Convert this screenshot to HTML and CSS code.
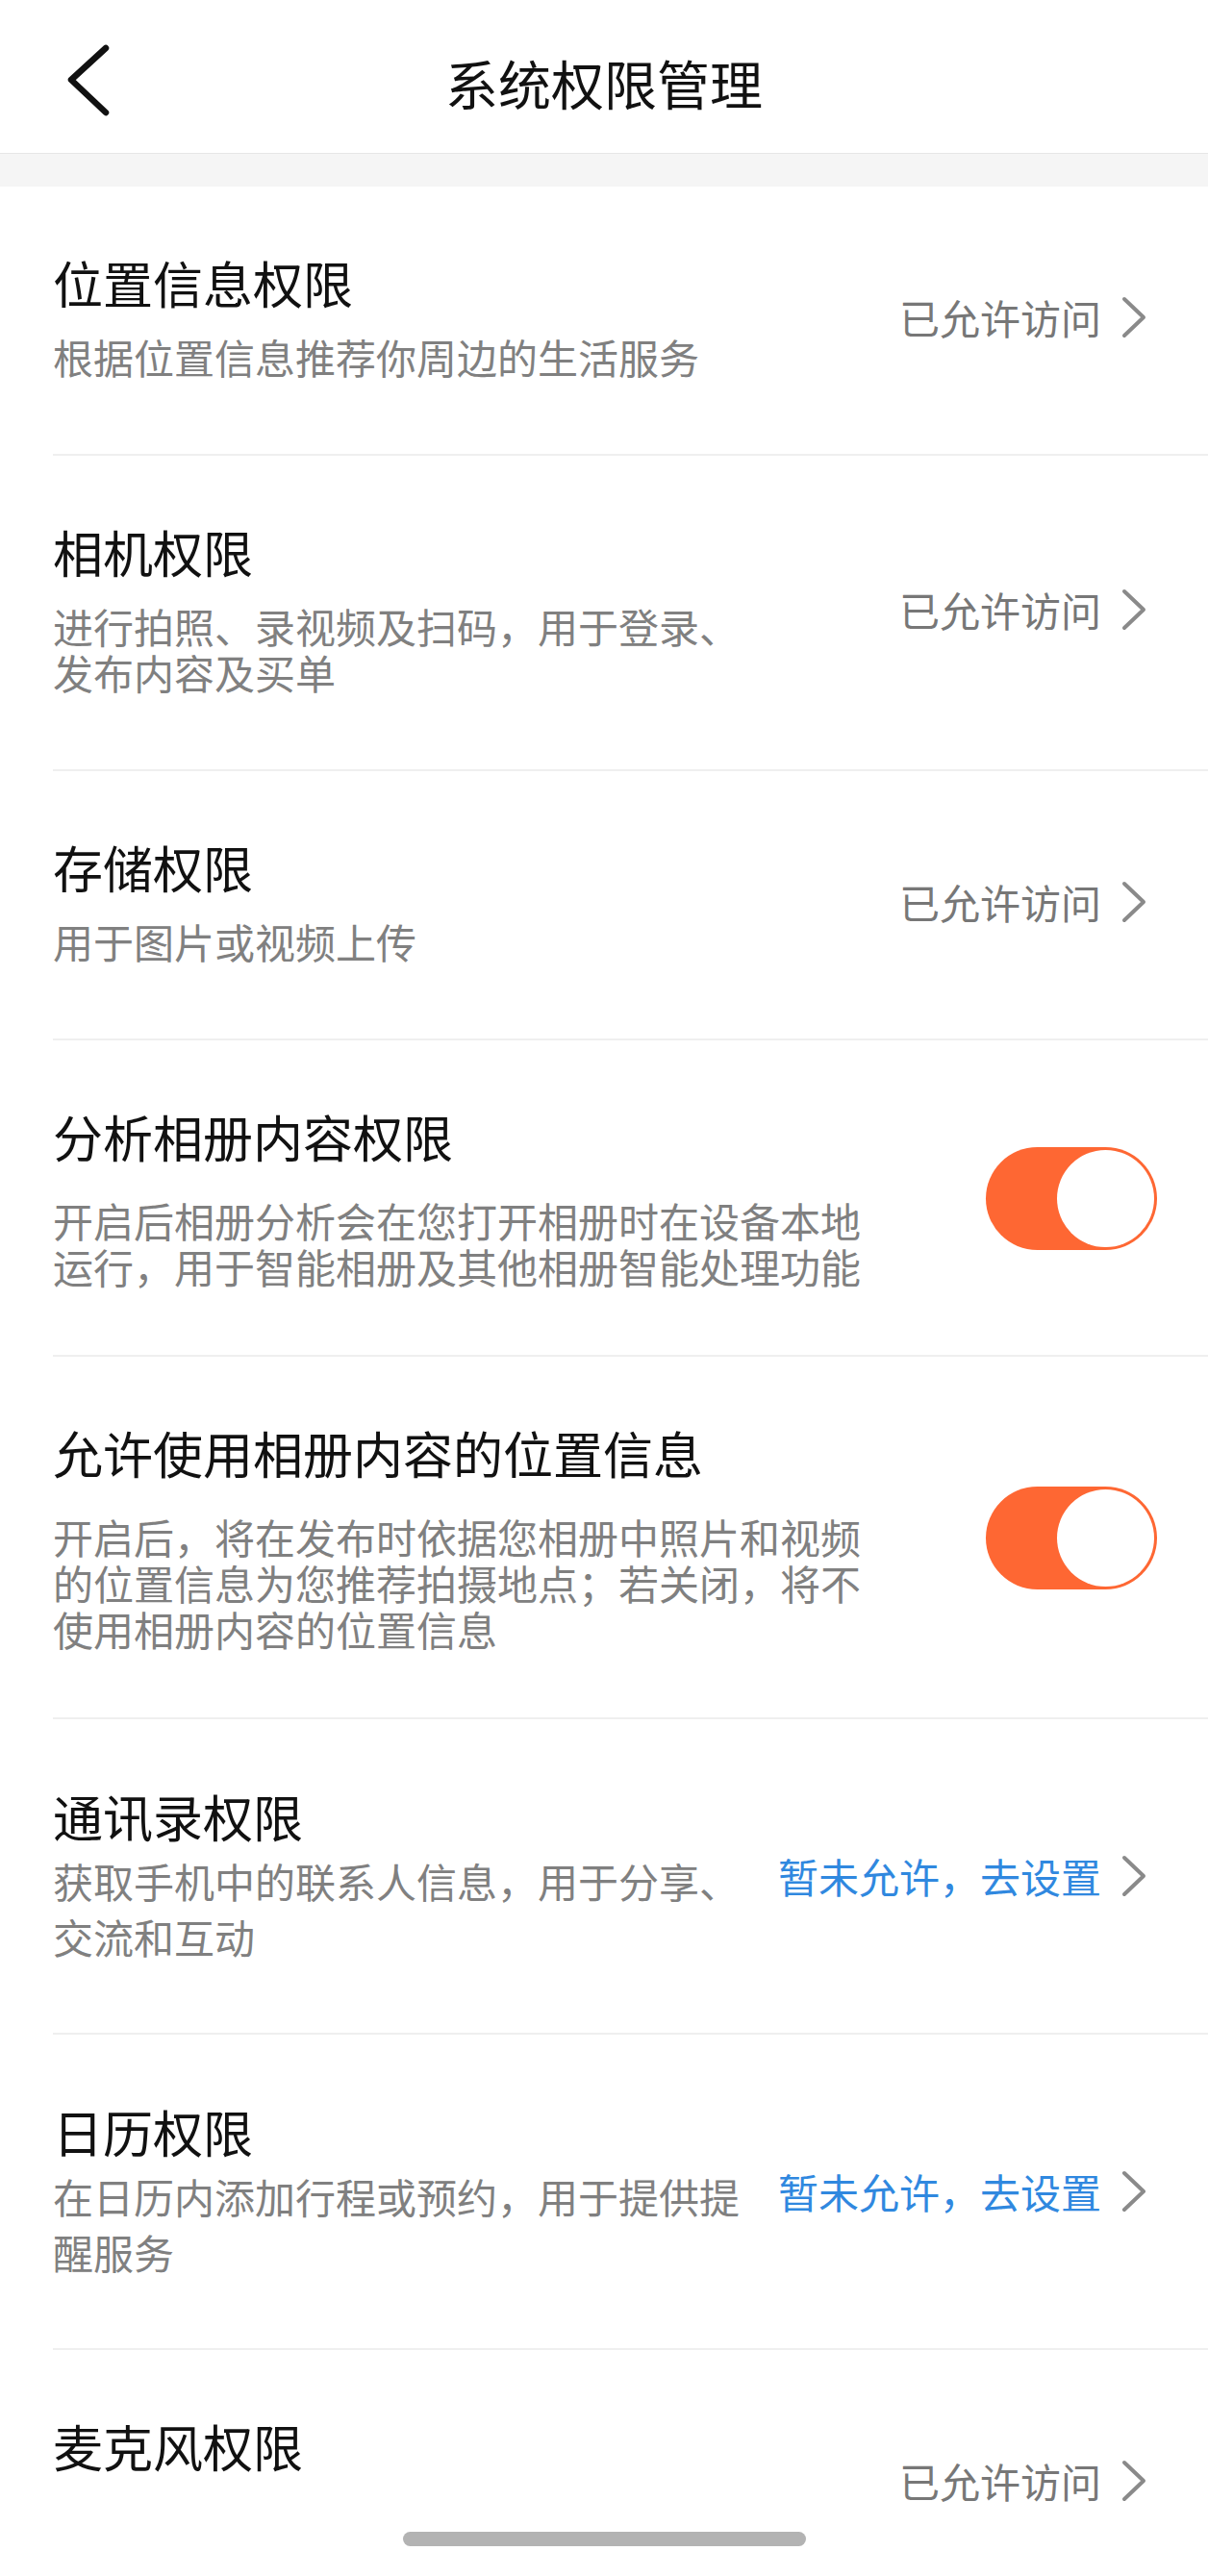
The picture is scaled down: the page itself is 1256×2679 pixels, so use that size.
FILE: index.html
```html
<!DOCTYPE html>
<html lang="zh-CN">
<head>
    <meta charset="UTF-8">
    <meta name="viewport" content="width=device-width, initial-scale=1.0">
    <title>系统权限管理</title>
    <link rel="stylesheet" href="styles.css">
</head>
<body>
    <header class="top-bar">
        <a class="back" href="#">
            <svg width="50" height="80" viewBox="0 0 50 80"><path d="M42 5 L6 38 L42 72" fill="none" stroke="#111" stroke-width="6.5" stroke-linecap="round" stroke-linejoin="round"/></svg>
        </a>
        <h1>系统权限管理</h1>
        <span></span>
    </header>
    <div class="gap"></div>

    <ul class="perm-list">
        <li class="item">
            <div class="info">
                <div class="title">位置信息权限</div>
                <div class="desc">根据位置信息推荐你周边的生活服务</div>
            </div>
            <div class="status">已允许访问<svg class="arrow" width="28" height="46" viewBox="0 0 28 46"><path d="M4 4 L24 23 L4 42" fill="none" stroke="#8a8a8a" stroke-width="4" stroke-linecap="round" stroke-linejoin="round"/></svg></div>
        </li>
        <li class="item">
            <div class="info">
                <div class="title">相机权限</div>
                <div class="desc">进行拍照、录视频及扫码，用于登录、发布内容及买单</div>
            </div>
            <div class="status">已允许访问<svg class="arrow" width="28" height="46" viewBox="0 0 28 46"><path d="M4 4 L24 23 L4 42" fill="none" stroke="#8a8a8a" stroke-width="4" stroke-linecap="round" stroke-linejoin="round"/></svg></div>
        </li>
        <li class="item">
            <div class="info">
                <div class="title">存储权限</div>
                <div class="desc">用于图片或视频上传</div>
            </div>
            <div class="status">已允许访问<svg class="arrow" width="28" height="46" viewBox="0 0 28 46"><path d="M4 4 L24 23 L4 42" fill="none" stroke="#8a8a8a" stroke-width="4" stroke-linecap="round" stroke-linejoin="round"/></svg></div>
        </li>
        <li class="item item-switch">
            <div class="info">
                <div class="title">分析相册内容权限</div>
                <div class="desc">开启后相册分析会在您打开相册时在设备本地运行，用于智能相册及其他相册智能处理功能</div>
            </div>
            <div class="switch on"><span class="knob"></span></div>
        </li>
        <li class="item item-switch">
            <div class="info">
                <div class="title">允许使用相册内容的位置信息</div>
                <div class="desc">开启后，将在发布时依据您相册中照片和视频的位置信息为您推荐拍摄地点；若关闭，将不使用相册内容的位置信息</div>
            </div>
            <div class="switch on"><span class="knob"></span></div>
        </li>
        <li class="item item-unset">
            <div class="info">
                <div class="title">通讯录权限</div>
                <div class="desc">获取手机中的联系人信息，用于分享、交流和互动</div>
            </div>
            <div class="status link">暂未允许，去设置<svg class="arrow" width="28" height="46" viewBox="0 0 28 46"><path d="M4 4 L24 23 L4 42" fill="none" stroke="#8a8a8a" stroke-width="4" stroke-linecap="round" stroke-linejoin="round"/></svg></div>
        </li>
        <li class="item item-unset">
            <div class="info">
                <div class="title">日历权限</div>
                <div class="desc">在日历内添加行程或预约，用于提供提醒服务</div>
            </div>
            <div class="status link">暂未允许，去设置<svg class="arrow" width="28" height="46" viewBox="0 0 28 46"><path d="M4 4 L24 23 L4 42" fill="none" stroke="#8a8a8a" stroke-width="4" stroke-linecap="round" stroke-linejoin="round"/></svg></div>
        </li>
        <li class="item">
            <div class="info">
                <div class="title">麦克风权限</div>
                <div class="desc">用于发布视频、直播及语音输入等功能</div>
            </div>
            <div class="status">已允许访问<svg class="arrow" width="28" height="46" viewBox="0 0 28 46"><path d="M4 4 L24 23 L4 42" fill="none" stroke="#8a8a8a" stroke-width="4" stroke-linecap="round" stroke-linejoin="round"/></svg></div>
        </li>
    </ul>

    <div class="home-bar"><span class="indicator"></span></div>
</body>
</html>
```

FILE: styles.css
```css
body {
    margin: 0;
    background: #fff;
    font-family: "Noto Sans CJK SC", "Noto Sans", sans-serif;
    color: #111;
}
.top-bar {
    display: grid;
    grid-template-columns: 1fr auto 1fr;
    align-items: center;
    height: 160px;
    box-sizing: border-box;
    padding-top: 10px;
    border-bottom: 1px solid #e6e6e6;
}
.back {
    display: flex;
    margin-left: 68px;
}
.top-bar h1 {
    margin: 0;
    font-size: 55px;
    font-weight: 400;
    line-height: 70px;
    color: #111;
}
.gap {
    height: 34px;
    background: #f5f5f5;
}
.perm-list {
    list-style: none;
    margin: 0;
    padding: 0;
}
.item {
    display: flex;
    align-items: center;
    justify-content: space-between;
    margin-left: 55px;
    padding: 70px 53px 77px 0;
    border-bottom: 2px solid #efefef;
}
.title {
    font-size: 52px;
    line-height: 60px;
    color: #111;
}
.desc {
    margin-top: 23px;
    max-width: 17.4em;
    font-size: 42px;
    line-height: 48px;
    color: #808080;
}
.status {
    display: flex;
    align-items: center;
    margin-right: 10px;
    font-size: 42px;
    line-height: 48px;
    color: #777;
    white-space: nowrap;
}
.status.link {
    color: #3088df;
}
.arrow {
    margin-left: 20px;
}
.item-switch {
    padding-bottom: 68px;
}
.item-switch .desc {
    margin-top: 33px;
    max-width: 20.4em;
}
.item-unset {
    padding-top: 71px;
    padding-bottom: 71px;
}
.item-unset .desc {
    margin-top: 8px;
    line-height: 58px;
}
.switch {
    display: flex;
    justify-content: flex-end;
    align-items: center;
    flex-shrink: 0;
    width: 178px;
    height: 107px;
    box-sizing: border-box;
    padding: 3px;
    border-radius: 54px;
    background: #fe6733;
}
.knob {
    width: 101px;
    height: 101px;
    border-radius: 50%;
    background: #fff;
}
.home-bar {
    position: fixed;
    left: 0;
    right: 0;
    bottom: 0;
    height: 77px;
    background: #fff;
    display: flex;
    justify-content: center;
    padding-top: 31px;
    box-sizing: border-box;
}
.indicator {
    width: 419px;
    height: 15px;
    border-radius: 8px;
    background: #b3b3b3;
}
```
